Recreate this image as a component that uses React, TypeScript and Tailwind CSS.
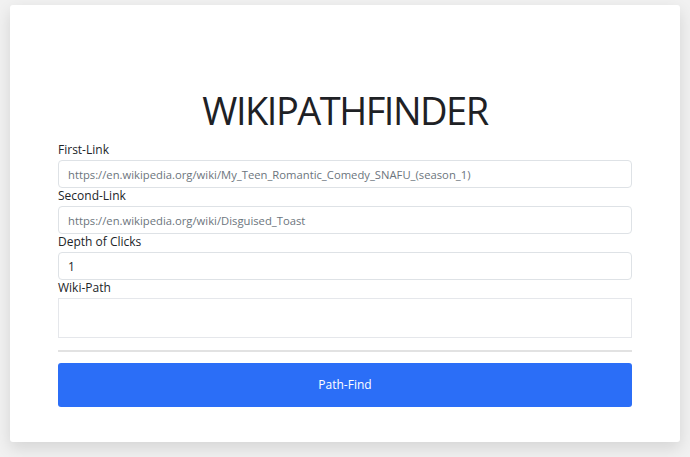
export default function App() {
  return (
    <div className="min-h-screen bg-[#f1f1f1] pt-[5px] pl-[10px] pr-[10px]" style={{ fontFamily: '"Open Sans", "Noto Sans", sans-serif' }}>
      <div className="w-[670px] h-[437px] bg-white rounded-[3px] shadow-[0_6px_16px_rgba(0,0,0,0.12)] px-12 pt-[80px]">
        <h1 className="text-center text-[38px] leading-[50px] text-[#1e2125] tracking-[-1.5px] mb-[7px]">WIKIPATHFINDER</h1>
        <form className="flex flex-col text-[12px] text-[#212529]">
          <label className="leading-[16px] mb-[2px]">First-Link</label>
          <input
            className="h-[28px] border border-[#dee2e6] rounded-[4px] px-[9px] text-[11.25px] text-[#6c757d] placeholder:text-[#6c757d] outline-none"
            placeholder="https://en.wikipedia.org/wiki/My_Teen_Romantic_Comedy_SNAFU_(season_1)"
          />
          <label className="leading-[16px] mb-[2px]">Second-Link</label>
          <input
            className="h-[28px] border border-[#dee2e6] rounded-[4px] px-[9px] text-[11.25px] text-[#6c757d] placeholder:text-[#6c757d] outline-none"
            placeholder="https://en.wikipedia.org/wiki/Disguised_Toast"
          />
          <label className="leading-[16px] mb-[2px]">Depth of Clicks</label>
          <input
            className="h-[28px] border border-[#dee2e6] rounded-[4px] px-[9px] text-[12px] text-[#212529] outline-none"
            defaultValue="1"
          />
          <label className="leading-[16px] mb-[2px]">Wiki-Path</label>
          <textarea className="h-[40px] border border-[#e5e7eb] resize-none outline-none" />
          <hr className="mt-[12px] border-t-2 border-[#e2e2e2]" />
          <button
            type="button"
            className="mt-[11px] h-[44px] rounded-[3px] bg-[#2b6ef7] text-white text-[12px]"
          >
            Path-Find
          </button>
        </form>
      </div>
    </div>
  );
}
